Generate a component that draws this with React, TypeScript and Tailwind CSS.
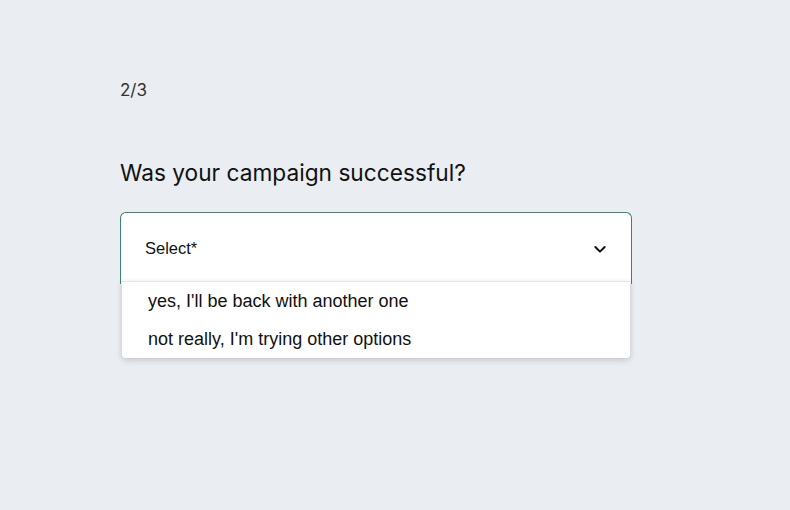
import React from "react"

const options = ["yes, I'll be back with another one", "not really, I'm trying other options"]

export default function App() {
  return (
    <div className="min-h-screen w-full bg-[#eaedf2] font-['Liberation_Sans',Arial,sans-serif] text-[#111]">
      <div className="pl-[120px] pt-[78px]">
        <p className="font-['Inter',sans-serif] text-[17px] leading-6 text-[#333]">2/3</p>
        <h1 className="mt-[57px] font-['Inter',sans-serif] text-[22.7px] leading-7 text-[#111]">
          Was your campaign successful?
        </h1>
        <div className="relative mt-[25px] w-[512px]">
          <button className="flex h-[72px] w-full items-center justify-between rounded-t-[6px] border border-b-0 border-[#3a8272] bg-white pl-6 pr-[23px] text-left">
            <span className="text-[16.5px] text-[#111]">Select*</span>
            <svg width="16" height="16" viewBox="0 0 24 24" fill="none" stroke="#111" strokeWidth="3" strokeLinecap="round" strokeLinejoin="round">
              <path d="M5 9l7 7 7-7" />
            </svg>
          </button>
          <ul className="absolute left-[2px] right-[2px] top-[69px] rounded-b-[4px] border-t border-[#e3e5ea] bg-white shadow-[0_2px_6px_rgba(0,0,0,0.18)]">
            {options.map((o) => (
              <li key={o} className="px-[26px] text-[18px] leading-[38px] text-[#111]">
                {o}
              </li>
            ))}
          </ul>
        </div>
      </div>
    </div>
  )
}
